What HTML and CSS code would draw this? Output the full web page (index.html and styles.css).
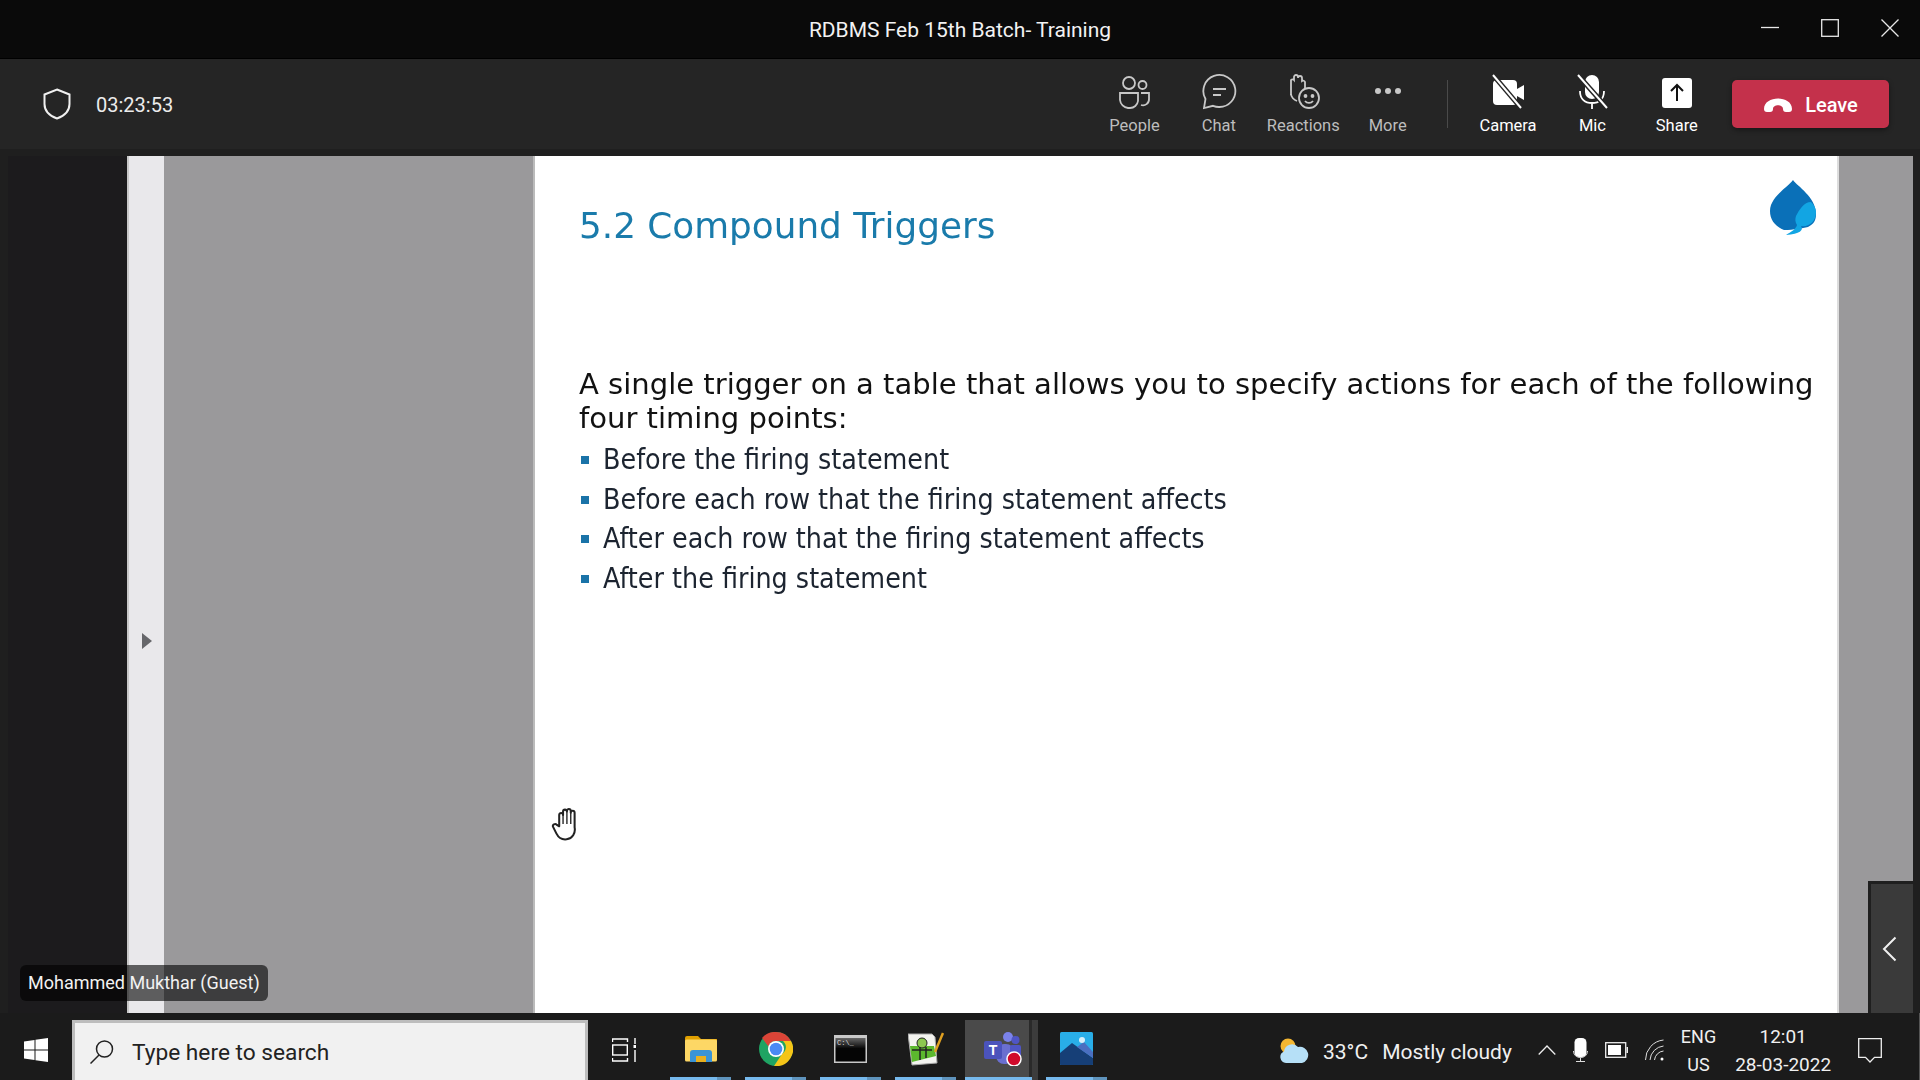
FILE: index.html
```html
<!DOCTYPE html>
<html lang="en">
<head>
  <meta charset="UTF-8" />
  <title>RDBMS Feb 15th Batch- Training</title>
  <link rel="stylesheet" href="styles.css">
</head>
<body>
  <div class="title-bar">
    <span class="title-text">RDBMS Feb 15th Batch- Training</span>
    <div class="win-controls">
      <svg width="18" height="18" viewBox="0 0 18 18"><path d="M0 8.500h18" stroke="#e8e8e8" stroke-width="1.300"/></svg>
      <svg width="18" height="18" viewBox="0 0 18 18"><rect x=".7" y=".7" width="16.600" height="16.600" fill="none" stroke="#e8e8e8" stroke-width="1.300"/></svg>
      <svg width="18" height="18" viewBox="0 0 18 18"><path d="M.5.5l17 17M17.500.5l-17 17" stroke="#e8e8e8" stroke-width="1.300"/></svg>
    </div>
  </div>

  <div class="toolbar">
    <div class="meeting-info">
      <svg width="28" height="32" viewBox="0 0 28 32"><path d="M14 1.500 L26.500 6.500 V16 C26.500 23 21 28 14 30.500 C7 28 1.500 23 1.500 16 V6.500 Z" fill="none" stroke="#f0f0f0" stroke-width="2"/></svg>
      <span class="timer">03:23:53</span>
    </div>
    <div class="actions">
      <div class="action">
        <svg width="36" height="36" viewBox="0 0 36 36" fill="none" stroke="#c8c8c8" stroke-width="1.800"><circle cx="13" cy="9" r="6"/><circle cx="26.500" cy="11" r="4"/><path d="M4 19h18v8a8 8 0 0 1-8 7h-2a9 9 0 0 1-8-8z"/><path d="M25 19h8v6a6 6 0 0 1-8 6"/></svg>
        <span>People</span>
      </div>
      <div class="action">
        <svg width="36" height="36" viewBox="0 0 36 36" fill="none" stroke="#c8c8c8" stroke-width="1.800"><path d="M3 34l1.500-9A16 16 0 1 1 18 33c-2 0-4-.4-6-1.200z"/><path d="M12 15h13M12 21h8"/></svg>
        <span>Chat</span>
      </div>
      <div class="action">
        <svg width="36" height="36" viewBox="0 0 36 36" fill="none" stroke="#c8c8c8" stroke-width="1.800"><path d="M6 21V6a2 2 0 0 1 3 0V3a2 2 0 0 1 4 0v1a2 2 0 0 1 4 0v3a2 2 0 0 1 3 1v7"/><path d="M6 20c0 3 3 6 6 7"/><circle cx="24" cy="24" r="10"/><circle cx="20.500" cy="22" r="1" fill="#c8c8c8"/><circle cx="27.500" cy="22" r="1" fill="#c8c8c8"/><path d="M20 27c2 2.500 6 2.500 8 0"/></svg>
        <span>Reactions</span>
      </div>
      <div class="action">
        <svg width="36" height="36" viewBox="0 0 36 36" fill="#c8c8c8"><circle cx="8" cy="17" r="3"/><circle cx="18" cy="17" r="3"/><circle cx="28" cy="17" r="3"/></svg>
        <span>More</span>
      </div>
      <div class="divider"></div>
      <div class="action on">
        <svg width="36" height="36" viewBox="0 0 36 36"><rect x="3" y="6" width="24" height="25" rx="4" fill="#fff"/><path d="M27 15l7-4v15l-7-4z" fill="#fff"/><path d="M3 1l28 33" stroke="#252525" stroke-width="5"/><path d="M3 1l28 33" stroke="#fff" stroke-width="2"/></svg>
        <span>Camera</span>
      </div>
      <div class="action on">
        <svg width="36" height="36" viewBox="0 0 36 36"><rect x="11" y="1" width="14" height="24" rx="7" fill="#fff"/><path d="M6 17c0 8 5 12 12 12s12-4 12-12M18 29v6" fill="none" stroke="#fff" stroke-width="1.800"/><path d="M4 1l29 33" stroke="#252525" stroke-width="5"/><path d="M4 1l29 33" stroke="#fff" stroke-width="2"/></svg>
        <span>Mic</span>
      </div>
      <div class="action on">
        <svg width="36" height="36" viewBox="0 0 36 36"><rect x="3" y="4" width="30" height="30" rx="3" fill="#fff"/><path d="M18 27V12M12 17l6-6 6 6" fill="none" stroke="#111" stroke-width="2"/></svg>
        <span>Share</span>
      </div>
      <button type="button" class="leave-button">
        <svg width="30" height="18" viewBox="0 0 30 18"><path d="M1 13C1 -1 29 -1 29 13c0 2-1 3-3 3h-3c-2 0-3-1-3-3 0-5-10-5-10 0 0 2-1 3-3 3H4c-2 0-3-1-3-3z" fill="#fff"/></svg>
        Leave
      </button>
    </div>
  </div>

  <div class="stage">
    <div class="stage-edge"></div>
    <div class="pane-strip">
      <svg width="10" height="16" viewBox="0 0 10 16"><path d="M0 0l10 8-10 8z" fill="#66666a"/></svg>
    </div>
    <div class="pane-gray"></div>
    <div class="slide">
      <div class="slide-head">
        <h1>5.2 Compound Triggers</h1>
        <svg class="logo" width="46" height="56" viewBox="0 0 46 56">
          <path d="M23 0C27 6 46 17 46 34C46 40 44 44 38 47C32 48 24 50 14 50C5 46 0 40 0 31C0 17 18 7 23 0Z" fill="#0a70b8"/>
          <path d="M46 32C46 42 39 47 31 46C34 50 30 54 16 55C21 52 26 49 27 45C25 42 25 39 26 36C29 30 34 22 41 22C44 25 46 28 46 32Z" fill="#12a5e3"/>
        </svg>
      </div>
      <p class="lead">A single trigger on a table that allows you to specify actions for each of the following four timing points:</p>
      <ul class="points">
        <li>Before the firing statement</li>
        <li>Before each row that the firing statement affects</li>
        <li>After each row that the firing statement affects</li>
        <li>After the firing statement</li>
      </ul>
    </div>
    <div class="pane-right"></div>
    <div class="stage-edge"></div>

    <svg class="hand" width="30" height="34" viewBox="0 0 26 30" fill="#fff" stroke="#222" stroke-width="1.800" stroke-linejoin="round">
      <path d="M7 17V7a1.700 1.700 0 0 1 3.400 0V4a1.700 1.700 0 0 1 3.400 0v-.5a1.700 1.700 0 0 1 3.400 0V5a1.700 1.700 0 0 1 3.400 0v13c1 5-2 10-7 10.500-4 .5-7-1-9-5l-3-6c-1-2 2-3 3-2z"/>
      <path d="M10.400 7v8M13.800 4v11M17.200 5v10" fill="none" stroke-width="1.200"/>
    </svg>
    <div class="name-tag">Mohammed Mukthar (Guest)</div>
    <div class="side-toggle">
      <svg width="15" height="26" viewBox="0 0 15 26"><path d="M13.500 1.500L2 13l11.500 11.500" fill="none" stroke="#f0f0f0" stroke-width="2"/></svg>
    </div>
  </div>

  <div class="taskbar">
    <svg class="start" width="24" height="24" viewBox="0 0 24 24" fill="#fff"><path d="M0 3.500l10.500-1.500v9.500H0zM11.500 1.800L24 0v11.500H11.500zM0 12.500h10.500V22L0 20.500zM11.500 12.500H24V24l-12.500-1.800z"/></svg>
    <div class="search-box">
      <svg width="24" height="24" viewBox="0 0 24 24" fill="none" stroke="#222" stroke-width="1.500"><circle cx="14.500" cy="9" r="8"/><path d="M9 15L.5 23.500"/></svg>
      <span>Type here to search</span>
    </div>
    <svg class="task-view" width="24" height="24" viewBox="0 0 24 24" fill="none" stroke="#fff" stroke-width="1.400"><path d="M.5 4V1h15v3M.5 20v3h15v-3"/><rect x=".7" y="7" width="14.600" height="10"/><path d="M23 0v6M23 12v12"/><rect x="21.500" y="7" width="3" height="3" fill="#fff" stroke="none"/></svg>

    <div class="app-list">
      <div class="app">
        <svg width="32" height="26" viewBox="0 0 32 26"><path d="M0 2a2 2 0 0 1 2-2h11l3 3h16v5H0z" fill="#e0a000"/><rect y="3.500" width="32" height="22" rx="1.500" fill="#fdd765"/><path d="M5 26V17a3 3 0 0 1 3-3h16a3 3 0 0 1 3 3v9h-6v-5h-10v5z" fill="#3a94d6"/><rect x="11" y="20" width="10" height="6" fill="#e8b020"/></svg>
      </div>
      <div class="app">
        <svg width="34" height="34" viewBox="0 0 34 34"><circle cx="17" cy="17" r="17" fill="#1fa463"/><path d="M17 0A17 17 0 0 1 32 9H17a8 8 0 0 0-7.500 5.500L3 6A17 17 0 0 1 17 0Z" fill="#db4437"/><path d="M32 9A17 17 0 0 1 15 34l8-12a8 8 0 0 0 1-13Z" fill="#f5c518"/><circle cx="17" cy="17" r="8" fill="#fff"/><circle cx="17" cy="17" r="6.300" fill="#4a8af4"/></svg>
      </div>
      <div class="app">
        <svg width="33" height="28" viewBox="0 0 33 28"><defs><linearGradient id="cmdFill" x1="0" y1="0" x2="0" y2="1"><stop offset="0" stop-color="#666"/><stop offset=".45" stop-color="#050505"/></linearGradient></defs><rect width="33" height="28" fill="#c9c9c9"/><rect x="1.500" y="3" width="30" height="23.500" fill="url(#cmdFill)"/><text x="3" y="10" class="cmd-text">C:\_</text></svg>
      </div>
      <div class="app">
        <svg width="36" height="34" viewBox="0 0 36 34"><path d="M0 2h24l3 3 2 26-25 2z" fill="#f4f4f0" stroke="#aaa"/><path d="M2 14h24l2 10-24 6z" fill="#5cb82e"/><circle cx="14" cy="11" r="5" fill="#8cc850" stroke="#222"/><path d="M4 18h20M12 15v13M18 15v11" stroke="#222" stroke-width="1.500"/><path d="M27 20L35 1" stroke="#e0a020" stroke-width="2.500"/></svg>
      </div>
      <div class="app active">
        <svg width="38" height="34" viewBox="0 0 38 34"><circle cx="24" cy="5" r="5" fill="#7b83eb"/><circle cx="31.500" cy="8" r="4" fill="#4f55c4"/><rect x="12" y="12" width="18" height="20" rx="8" fill="#6a6fd0"/><rect x="26" y="13" width="11" height="12" rx="2" fill="#4f55c4"/><rect y="9" width="18" height="18" rx="2" fill="#4b53bc"/><text x="9" y="23" class="teams-t">T</text><circle cx="30" cy="27" r="7" fill="#d00a2c" stroke="#fff" stroke-width="1.500"/></svg>
      </div>
      <div class="app">
        <svg width="33" height="33" viewBox="0 0 33 33"><rect width="33" height="33" rx="1.500" fill="#29aee8"/><path d="M0 21L12 11 33 26v6a1 1 0 0 1-1 1H1a1 1 0 0 1-1-1z" fill="#163f77"/><path d="M17 15l7-5 9 10v6z" fill="#4a6fc0"/><circle cx="22" cy="8" r="3" fill="#d8f0fa"/></svg>
      </div>
    </div>

    <div class="tray">
      <div class="weather">
        <svg width="30" height="25" viewBox="0 0 30 25"><circle cx="9" cy="8" r="7.500" fill="#f4b731"/><path d="M7 25a6 6 0 0 1-2-11.500A8 8 0 0 1 19 9a7.500 7.500 0 0 1 4 16z" fill="#b6e0f7"/></svg>
        <span class="temp">33°C</span>
        <span>Mostly cloudy</span>
      </div>
      <svg class="tray-up" width="18" height="10" viewBox="0 0 18 10"><path d="M.7 9.500L9 1l8.300 8.500" fill="none" stroke="#eee" stroke-width="1.300"/></svg>
      <svg width="15" height="24" viewBox="0 0 15 24"><rect x="1.500" width="12" height="19" rx="4.500" fill="#fff"/><path d="M.5 13c0 4 3 6.500 7 6.500s7-2.500 7-6.500M7.500 19.500V23.500M3 23.500h9" fill="none" stroke="#ddd"/></svg>
      <svg width="23" height="16" viewBox="0 0 23 16"><rect x=".7" y=".7" width="20" height="14.600" fill="none" stroke="#eee" stroke-width="1.300"/><rect x="3" y="3" width="13" height="10" fill="#fff"/><rect x="21.500" y="5" width="1.500" height="6" fill="#eee"/></svg>
      <svg width="19" height="22" viewBox="0 0 19 22" fill="none" stroke="#ddd"><path d="M.5 21a20 20 0 0 1 18-20M5 21a15 15 0 0 1 13.500-14M9.500 21a10 10 0 0 1 9-9"/><circle cx="17" cy="20" r="1.500" fill="#fff" stroke="none"/></svg>
      <div class="lang"><span>ENG</span><span>US</span></div>
      <div class="clock"><span>12:01</span><span>28-03-2022</span></div>
      <svg class="notify" width="24" height="25" viewBox="0 0 24 25"><path d="M.7.7h22.600v18.600h-6.800L12 24l-4.500-4.700H.7z" fill="none" stroke="#eee" stroke-width="1.300"/></svg>
    </div>
  </div>
</body>
</html>
```

FILE: styles.css
```css
* {
  box-sizing: border-box;
}
html, body {
  margin: 0;
  height: 100%;
  overflow: hidden;
}
body {
  display: flex;
  flex-direction: column;
  width: 1920px;
  height: 1080px;
  background: #1f1f1f;
  color: #fff;
  font-family: Roboto, "Liberation Sans", sans-serif;
}

/* window title */
.title-bar {
  position: relative;
  flex: 0 0 59px;
  display: flex;
  align-items: center;
  justify-content: center;
  padding-top: 2px;
  background: #0a0a0a;
  border-bottom: 1px solid #000;
}
.title-text {
  font-size: 21px;
  color: #f2f2f2;
}
.win-controls {
  position: absolute;
  right: 21px;
  top: 19px;
  display: flex;
  gap: 42px;
}

/* meeting toolbar */
.toolbar {
  flex: 0 0 90px;
  display: flex;
  align-items: center;
  justify-content: space-between;
  padding: 0 31px 0 43px;
  background: #252525;
}
.meeting-info {
  display: flex;
  align-items: center;
  gap: 25px;
}
.timer {
  padding-top: 2px;
  font-size: 20px;
  color: #ececec;
}
.actions {
  display: flex;
  align-items: center;
}
.action {
  width: 84.400px;
  display: flex;
  flex-direction: column;
  align-items: center;
  gap: 6px;
  font-size: 16.500px;
  color: #bdbdbd;
}
.action.on {
  color: #fff;
}
.divider {
  width: 1px;
  height: 48px;
  margin: 0 18px 0 17px;
  background: #4a4a4a;
}
.leave-button {
  width: 157px;
  height: 48px;
  margin-left: 13px;
  padding: 2px 0 0;
  display: flex;
  align-items: center;
  justify-content: center;
  gap: 12px;
  border: none;
  border-radius: 5px;
  background: #c4314b;
  color: #fff;
  font-family: inherit;
  font-size: 20px;
  font-weight: 500;
  box-shadow: 0 2px 5px rgba(0, 0, 0, 0.4);
}

/* shared screen */
.stage {
  position: relative;
  flex: 0 0 864px;
  display: grid;
  grid-template-columns: 127px 37px 371px 1304px 74px 7px;
  padding-top: 7px;
  background: #1f1f1f;
}
.stage-edge:first-child {
  border-left: 8px solid #1f1f1f;
  background: #1c1b1d;
}
.pane-strip {
  display: flex;
  align-items: center;
  justify-content: center;
  padding-top: 112px;
  background: #e9e8eb;
  border-left: 2px solid #c8c8c8;
}
.pane-gray {
  background: #9a999b;
  border-right: 2px solid #bbb;
}
.pane-right {
  background: #9a999b;
}
.slide {
  padding: 24px 10px 0 44px;
  background: #fff;
  border-right: 2px solid #ddd;
  font-family: "DejaVu Sans", sans-serif;
  color: #111;
  filter: blur(0.4px);
}
.slide-head {
  display: flex;
  justify-content: space-between;
  align-items: flex-start;
  padding-right: 11px;
}
.slide-head h1 {
  margin: 22px 0 0;
  font-size: 35.800px;
  line-height: 48px;
  font-weight: normal;
  color: #1a7bab;
}
.lead {
  margin: 117px 0 0;
  font-size: 29.050px;
  line-height: 34px;
}
.points {
  margin: 5px 0 0;
  padding: 0;
  list-style: none;
}
.points li {
  position: relative;
  padding-left: 24px;
  font-size: 28.300px;
  font-stretch: condensed;
  line-height: 39.500px;
  color: #1c2430;
}
.points li::before {
  content: "";
  position: absolute;
  left: 2px;
  top: 16px;
  width: 8px;
  height: 8px;
  background: #1a73a8;
}
.hand {
  position: absolute;
  left: 551px;
  top: 658px;
}
.name-tag {
  position: absolute;
  left: 20px;
  top: 816px;
  width: 248px;
  height: 36px;
  padding: 0 0 2px 8px;
  display: flex;
  align-items: center;
  border-radius: 6px;
  background: rgba(0, 0, 0, 0.6);
  font-size: 18px;
  color: #f2f2f2;
}
.side-toggle {
  position: absolute;
  left: 1868px;
  top: 732px;
  width: 45px;
  height: 132px;
  padding-right: 5px;
  display: flex;
  align-items: center;
  justify-content: center;
  border-top: 3px solid #1f1f1f;
  border-left: 3px solid #1f1f1f;
  background: #3a3a3a;
}

/* windows taskbar */
.taskbar {
  flex: 0 0 67px;
  display: flex;
  align-items: flex-end;
  background: #1b1b1b;
  border-right: 1px solid #555;
}
.start {
  margin: 0 24px 18px 24px;
}
.search-box {
  width: 516px;
  height: 60px;
  display: flex;
  align-items: center;
  gap: 18px;
  padding: 1px 0 0 15px;
  background: #f1f1f1;
  border: 3px solid #bdbdbd;
  border-bottom: none;
  font-size: 22.700px;
  color: #222;
}
.task-view {
  margin: 0 34px 18px 24px;
}
.app-list {
  display: flex;
  align-items: flex-end;
}
.app {
  width: 61px;
  height: 60px;
  margin-right: 14px;
  padding-bottom: 3px;
  display: flex;
  align-items: center;
  justify-content: center;
  background: linear-gradient(90deg, #76b9ed 47px, #5f94bd 47px) bottom / 100% 3px no-repeat;
}
.app.active {
  width: 73px;
  margin-left: -5px;
  margin-right: 8px;
  padding-left: 2px;
  background:
    linear-gradient(#76b9ed, #76b9ed) left bottom / 67px 3px no-repeat,
    linear-gradient(90deg, #4a4a4a 64px, #2a2a2a 64px, #2a2a2a 67px, #3c3c3c 67px);
}
.cmd-text {
  font-family: "Liberation Mono", monospace;
  font-size: 7px;
  fill: #ddd;
}
.teams-t {
  font-family: "Liberation Sans", sans-serif;
  font-size: 14px;
  font-weight: bold;
  fill: #fff;
  text-anchor: middle;
}
.tray {
  flex: 1;
  height: 60px;
  margin-left: 158px;
  display: flex;
  align-items: center;
  font-size: 21px;
  color: #f0f0f0;
}
.weather {
  display: flex;
  align-items: center;
  gap: 14px;
  margin-right: 26px;
  padding-top: 3px;
}
.weather svg {
  margin-top: -3px;
}
.tray > svg {
  margin-right: 17px;
}
.lang, .clock {
  display: flex;
  flex-direction: column;
  align-items: center;
  gap: 7px;
  font-size: 18px;
  line-height: 21px;
}
.lang {
  margin-right: 19px;
}
.clock {
  margin-right: 27px;
  font-size: 19px;
}
```
